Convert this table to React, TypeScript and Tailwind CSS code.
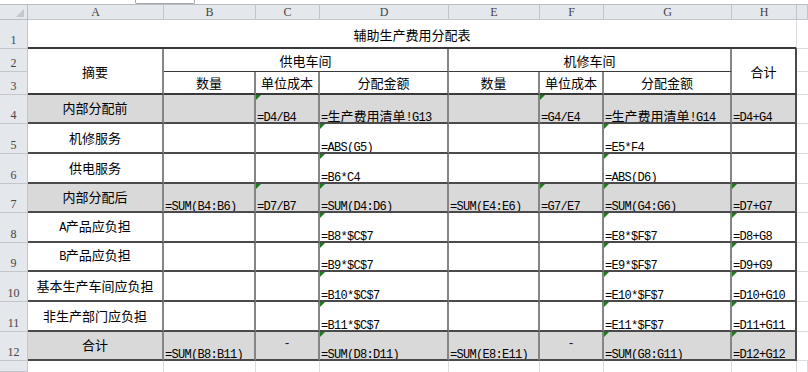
import type { ReactNode } from 'react'

type Row = {
  n: number
  label: string
  gray?: boolean
  cells: string[] // B..H
  marks: boolean[] // green error triangles, B..H
}

const rows: Row[] = [
  { n: 4, label: '内部分配前', gray: true, cells: ['', '=D4/B4', '=生产费用清单!G13', '', '=G4/E4', '=生产费用清单!G14', '=D4+G4'], marks: [false, true, false, false, true, false, false] },
  { n: 5, label: '机修服务', cells: ['', '', '=ABS(G5)', '', '', '=E5*F4', ''], marks: [false, false, true, false, false, true, false] },
  { n: 6, label: '供电服务', cells: ['', '', '=B6*C4', '', '', '=ABS(D6)', ''], marks: [false, false, true, false, false, true, false] },
  { n: 7, label: '内部分配后', gray: true, cells: ['=SUM(B4:B6)', '=D7/B7', '=SUM(D4:D6)', '=SUM(E4:E6)', '=G7/E7', '=SUM(G4:G6)', '=D7+G7'], marks: [false, true, true, false, true, true, true] },
  { n: 8, label: 'A产品应负担', cells: ['', '', '=B8*$C$7', '', '', '=E8*$F$7', '=D8+G8'], marks: [false, false, true, false, false, true, true] },
  { n: 9, label: 'B产品应负担', cells: ['', '', '=B9*$C$7', '', '', '=E9*$F$7', '=D9+G9'], marks: [false, false, true, false, false, true, true] },
  { n: 10, label: '基本生产车间应负担', cells: ['', '', '=B10*$C$7', '', '', '=E10*$F$7', '=D10+G10'], marks: [false, false, true, false, false, true, true] },
  { n: 11, label: '非生产部门应负担', cells: ['', '', '=B11*$C$7', '', '', '=E11*$F$7', '=D11+G11'], marks: [false, false, true, false, false, true, true] },
  { n: 12, label: '合计', gray: true, cells: ['=SUM(B8:B11)', '-', '=SUM(D8:D11)', '=SUM(E8:E11)', '-', '=SUM(G8:G11)', '=D12+G12'], marks: [false, false, true, false, false, true, true] },
]

const letters = ['A', 'B', 'C', 'D', 'E', 'F', 'G', 'H', '']

// SimSun look: half-width glyphs narrow, CJK full width
function Txt({ s, low }: { s: string; low?: boolean }) {
  const parts = s.split(/([\u3400-\u9fff]+)/)
  return (
    <span className={`whitespace-nowrap leading-[14px] text-black ${low ? 'mb-[-3px]' : ''}`}>
      {parts.map((p, i) =>
        !p ? null : /[\u3400-\u9fff]/.test(p) ? (
          <span key={i} className="font-['Noto_Sans_CJK_SC',sans-serif] text-[13px]">{p}</span>
        ) : (
          <span key={i} className="font-['Liberation_Mono','Noto_Sans_CJK_SC',monospace] text-[12px] tracking-[-0.7px]">{p}</span>
        ),
      )}
    </span>
  )
}

function RowHead({ n, children }: { n?: number; children?: ReactNode }) {
  return (
    <div className="flex items-end justify-center border-b border-r border-[#c3c7cd] bg-[#e4e7ec] pb-[1px] font-['Liberation_Serif',serif] text-[12px] leading-[13px] text-[#444]">
      {n ?? children}
    </div>
  )
}

function Mark() {
  return <span className="absolute left-0 top-0 h-0 w-0 border-r-[5px] border-t-[5px] border-r-transparent border-t-[#1f7a1f]" />
}

export default function App() {
  return (
    <div className="h-[372px] w-[808px] overflow-hidden bg-white text-[#1a1a1a]">
      <div className="h-[5px] border-b border-[#b9bcc0] bg-white">
        <div className="ml-[135px] h-[4px] w-[60px] rounded-b-[2px] border border-t-0 border-[#a3a6aa]" />
      </div>

      <div className="grid grid-cols-[28px_136px_92px_64px_129px_91px_64px_128px_65px_11px] grid-rows-[15px_29px_23px_23px_29px_30px_30px_29px_30px_29px_30px_30px_29px_11px]">
        {/* column headers */}
        <div className="relative border-b border-r border-[#b9bdc3] bg-[#e4e7ec]">
          <span className="absolute bottom-[2px] right-[3px] h-0 w-0 border-b-[8px] border-l-[8px] border-b-[#c4c8ce] border-l-transparent" />
        </div>
        {letters.map((l, i) => (
          <div
            key={i}
            className="flex items-center justify-center border-b border-r border-[#c3c7cd] bg-[#e4e7ec] font-['Liberation_Serif',serif] text-[12px] leading-[13px] text-[#444]"
          >
            {l}
          </div>
        ))}

        {/* row 1: title */}
        <RowHead n={1} />
        <div className="col-span-8 flex items-center justify-center border-b-2 border-r border-b-[#3a3a3a] border-r-[#dadcdf] pt-[2px]">
          <Txt s="辅助生产费用分配表" />
        </div>
        <div className="border-b border-[#dadcdf]" />

        {/* rows 2-3: headers */}
        <RowHead n={2} />
        <div className="row-span-2 flex items-center justify-center border-b-2 border-r-2 border-b-[#3a3a3a] border-r-[#858585]">
          <Txt s="摘要" />
        </div>
        <div className="col-span-3 flex items-center justify-center border-b border-r-2 border-b-[#3a3a3a] border-r-[#858585]">
          <Txt s="供电车间" />
        </div>
        <div className="col-span-3 flex items-center justify-center border-b border-r-2 border-b-[#3a3a3a] border-r-[#858585]">
          <Txt s="机修车间" />
        </div>
        <div className="row-span-2 flex items-center justify-center border-b-2 border-r-2 border-b-[#3a3a3a] border-r-[#4a4a4a]">
          <Txt s="合计" />
        </div>
        <div className="border-b border-[#dadcdf]" />

        <RowHead n={3} />
        {['数量', '单位成本', '分配金额', '数量', '单位成本', '分配金额'].map((t, i) => (
          <div key={i} className="flex items-center justify-center border-b-2 border-r-2 border-b-[#3a3a3a] border-r-[#858585]">
            <Txt s={t} />
          </div>
        ))}
        <div className="border-b border-[#dadcdf]" />

        {/* body */}
        {rows.map((r) => (
          <Body key={r.n} r={r} />
        ))}

        {/* row 13 */}
        <RowHead />
        {letters.map((_, i) => (
          <div key={i} className="border-r border-[#dadcdf]" />
        ))}
      </div>
    </div>
  )
}

function Body({ r }: { r: Row }) {
  const bg = r.gray ? 'bg-[#d9d9d9]' : 'bg-white'
  return (
    <>
      <RowHead n={r.n} />
      <div className={`flex items-center justify-center border-b-2 border-r-2 border-b-[#4a4a4a] border-r-[#858585] pb-[2px] ${bg}`}>
        <Txt s={r.label} />
      </div>
      {r.cells.map((v, i) => {
        const last = i === r.cells.length - 1
        return (
          <div
            key={i}
            className={`relative flex overflow-hidden border-b-2 border-r-2 border-b-[#4a4a4a] ${last ? 'border-r-[#4a4a4a]' : 'border-r-[#858585]'} ${bg} ${
              v === '-' ? 'items-center justify-center pb-[3px]' : 'items-end pl-[1px]'
            }`}
          >
            {r.marks[i] ? <Mark /> : null}
            {v === '-' ? <span className="font-['Liberation_Mono',monospace] text-[12px]">-</span> : <Txt s={v} low />}
          </div>
        )
      })}
      <div className="border-b border-[#dadcdf]" />
    </>
  )
}
